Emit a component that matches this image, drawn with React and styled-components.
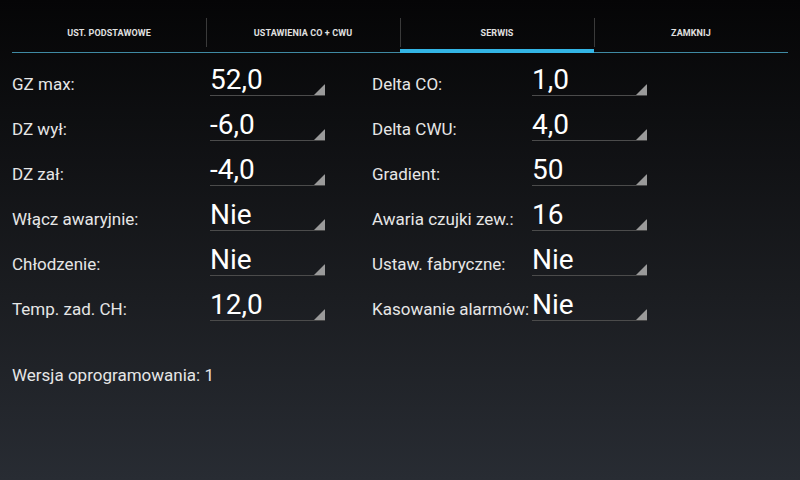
import React from 'react';
import styled, { createGlobalStyle } from 'styled-components';

const GlobalStyle = createGlobalStyle`
  html, body {
    margin: 0;
    padding: 0;
    height: 480px;
    overflow: hidden;
    background: linear-gradient(to bottom, #050506 0%, #1b1d21 62%, #282c33 100%);
    font-family: Roboto, "Liberation Sans", sans-serif;
    color: #e8e8e8;
  }
`;

const Screen = styled.div`
  width: 800px;
  height: 480px;
  box-sizing: border-box;
  padding: 18px 12px 0;
  display: flex;
  flex-direction: column;
`;

const TabBar = styled.div`
  display: grid;
  grid-template-columns: repeat(4, 1fr);
  height: 35px;
  box-sizing: border-box;
  border-bottom: 1px solid #3f8aa3;
`;

const Tab = styled.div`
  position: relative;
  display: flex;
  align-items: center;
  justify-content: center;
  padding-bottom: 4px;
  font-size: 9px;
  font-weight: 700;
  letter-spacing: 0.1px;
  text-transform: uppercase;
  color: #e0e0e0;
  box-shadow: ${p => (p.active ? 'inset 0 -3px 0 #33b5e5, 0 1px 0 #33b5e5' : 'none')};

  &:not(:first-child)::before {
    content: '';
    position: absolute;
    left: 0;
    top: 0;
    bottom: 5px;
    width: 1px;
    background: #3a3a3a;
  }
`;

const Form = styled.div`
  display: grid;
  grid-template-columns: 198px 115px 47px 160px 115px;
  grid-auto-rows: 45px;
`;

const Label = styled.div`
  align-self: end;
  padding-bottom: 4px;
  font-size: 17px;
  line-height: 20px;
  color: #e6e6e6;
  white-space: nowrap;
  grid-column: ${p => (p.right ? 4 : 1)};
`;

const Spinner = styled.div`
  align-self: end;
  margin-bottom: 2px;
  display: flex;
  align-items: flex-end;
  border-bottom: 1px solid #4b4b4b;
  grid-column: ${p => (p.right ? 5 : 2)};
`;

const Value = styled.div`
  flex: 1;
  font-size: 28px;
  line-height: 30px;
  color: #ffffff;
`;

const Arrow = styled.svg`
  display: block;
  width: 11px;
  height: 11px;
  flex: none;
`;

const Footer = styled.div`
  margin-top: 42px;
  font-size: 17px;
  line-height: 20px;
  color: #e6e6e6;
`;

const tabs = ['Ust. podstawowe', 'Ustawienia CO + CWU', 'Serwis', 'Zamknij'];

const rows = [
  ['GZ max:', '52,0', 'Delta CO:', '1,0'],
  ['DZ wył:', '-6,0', 'Delta CWU:', '4,0'],
  ['DZ zał:', '-4,0', 'Gradient:', '50'],
  ['Włącz awaryjnie:', 'Nie', 'Awaria czujki zew.:', '16'],
  ['Chłodzenie:', 'Nie', 'Ustaw. fabryczne:', 'Nie'],
  ['Temp. zad. CH:', '12,0', 'Kasowanie alarmów:', 'Nie']
];

const Field = ({ value, right }) => (
  <Spinner right={right}>
    <Value>{value}</Value>
    <Arrow viewBox="0 0 11 11">
      <path d="M11 0 L11 11 L0 11 L9.5 1.5 Q10.5 0.5 11 0 Z" fill="#9a9a9a" />
    </Arrow>
  </Spinner>
);

const App = () => (
  <Screen>
    <GlobalStyle />
    <TabBar>
      {tabs.map((t, i) => (
        <Tab key={t} active={i === 2}>
          {t}
        </Tab>
      ))}
    </TabBar>
    <Form>
      {rows.map(([l1, v1, l2, v2]) => (
        <React.Fragment key={l1}>
          <Label>{l1}</Label>
          <Field value={v1} />
          <Label right>{l2}</Label>
          <Field value={v2} right />
        </React.Fragment>
      ))}
    </Form>
    <Footer>Wersja oprogramowania: 1</Footer>
  </Screen>
);

export default App;
